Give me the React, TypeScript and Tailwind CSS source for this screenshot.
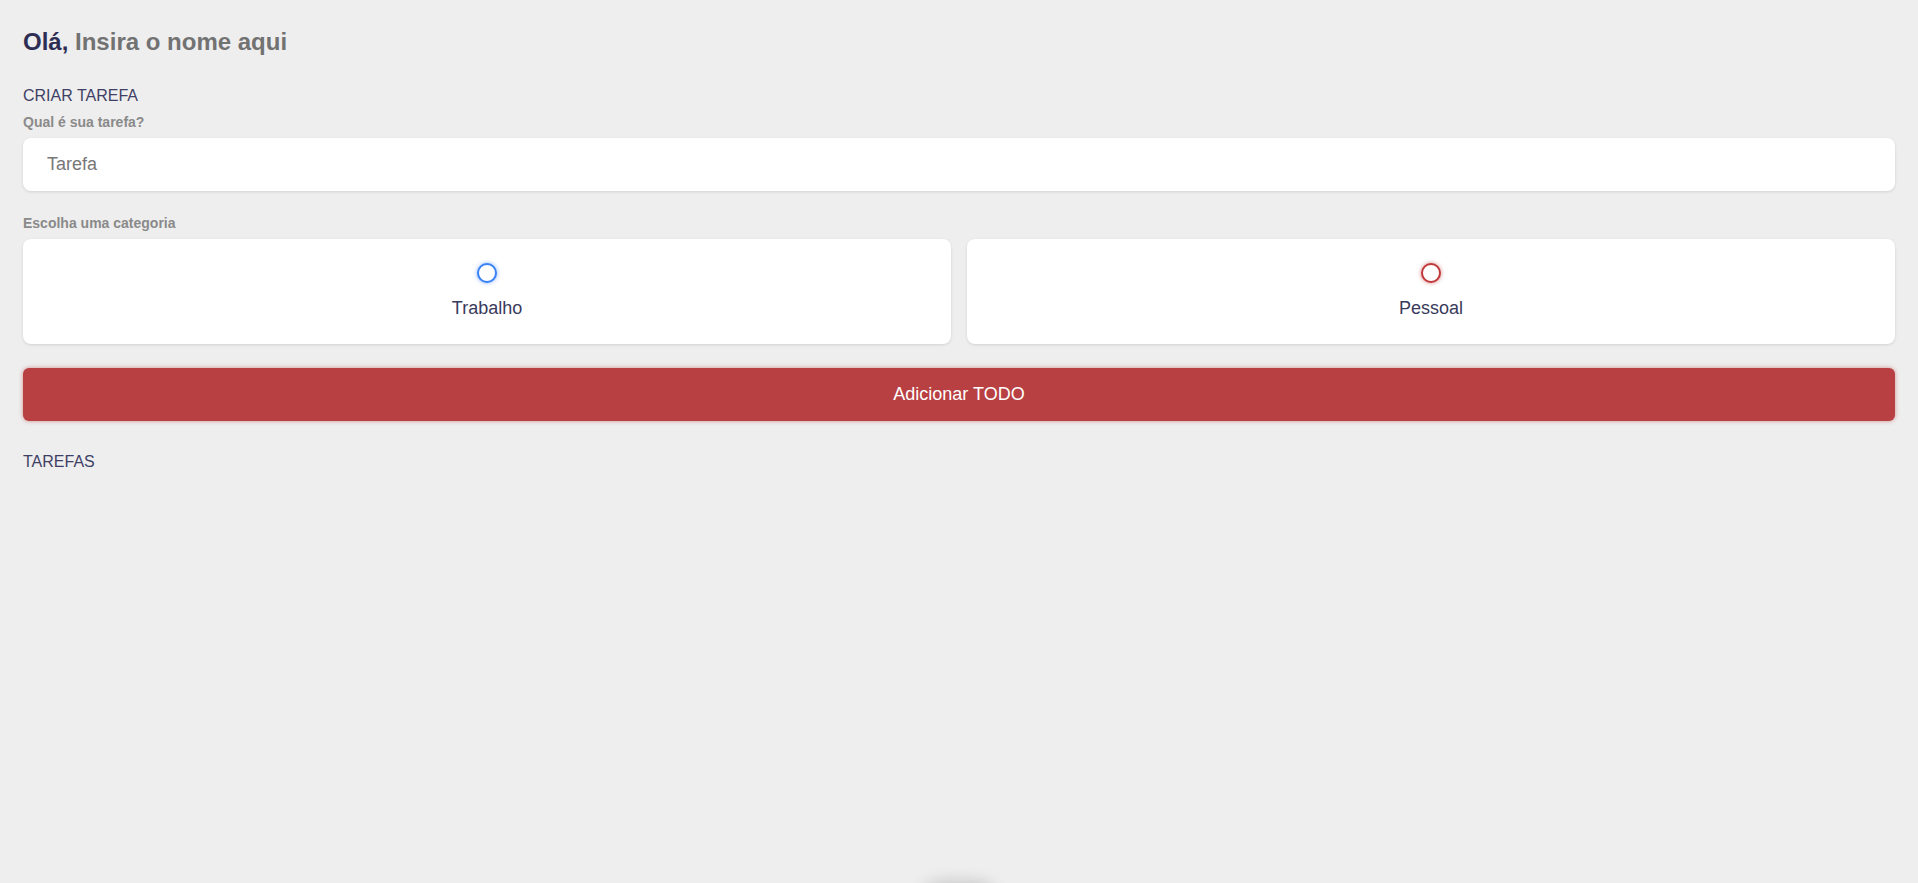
const categories = [
  { label: 'Trabalho', ring: 'border-[#3a82f6] shadow-[0_0_4px_rgba(58,130,246,0.6)]' },
  { label: 'Pessoal', ring: 'border-[#c0393b] shadow-[0_0_4px_rgba(192,57,59,0.6)]' },
];

export default function App() {
  return (
    <main className="min-h-screen bg-[#eeeeee] px-[23px] pt-7 font-['Liberation_Sans',Arial,sans-serif]">
      <h1 className="text-[24px] leading-[28px] font-bold text-[#2e2e55]">
        Olá, <span className="text-[#727272]">Insira o nome aqui</span>
      </h1>

      <section className="mt-[30px]">
        <h2 className="text-[16px] leading-[20px] text-[#3f3f66]">CRIAR TAREFA</h2>

        <label className="mt-2 block text-[14px] leading-[16px] font-bold text-[#8a8a8a]">
          Qual é sua tarefa?
        </label>
        <input
          type="text"
          placeholder="Tarefa"
          className="mt-2 block h-[53px] w-full rounded-lg bg-white px-6 text-[18px] text-[#444] placeholder:text-[#777] shadow-[0_1px_3px_rgba(0,0,0,0.12)] outline-none"
        />

        <label className="mt-6 block text-[14px] leading-[16px] font-bold text-[#8a8a8a]">
          Escolha uma categoria
        </label>
        <div className="mt-2 grid grid-cols-2 gap-4">
          {categories.map((cat) => (
            <label
              key={cat.label}
              className="flex h-[105px] cursor-pointer flex-col items-center rounded-lg bg-white pt-6 shadow-[0_1px_3px_rgba(0,0,0,0.12)]"
            >
              <span className={`block h-5 w-5 rounded-full border-2 bg-white ${cat.ring}`} />
              <span className="mt-3 text-[18px] leading-[27px] text-[#3a3a5c]">{cat.label}</span>
            </label>
          ))}
        </div>

        <button className="mt-6 block h-[53px] w-full rounded-md bg-[#b84042] text-[18px] text-white shadow-[0_0_4px_rgba(184,64,66,0.55)]">
          Adicionar TODO
        </button>
      </section>

      <section className="mt-[31px]">
        <h2 className="text-[16px] leading-[20px] text-[#3f3f66]">TAREFAS</h2>
      </section>

      <div className="mt-[412px] flex justify-center">
        <div className="h-12 w-20 rounded-full bg-[#eeeeee] shadow-[0_-2px_16px_rgba(0,0,0,0.18)]" />
      </div>
    </main>
  );
}
